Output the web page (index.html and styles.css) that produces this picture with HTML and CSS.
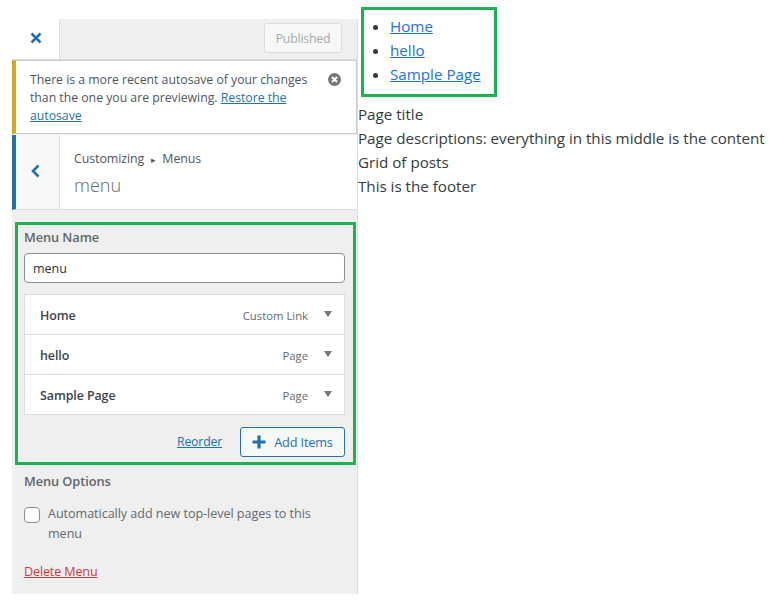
FILE: index.html
```html
<!DOCTYPE html>
<html lang="en">
<head>
<meta charset="utf-8">
<title>Customizing Menus</title>
<link rel="stylesheet" href="styles.css">
</head>
<body>
<div class="page">
  <aside class="panel">
    <header class="topbar">
      <div class="close-tab">
        <svg width="12" height="12" viewBox="0 0 12 12"><path d="M1.500 1.500 L10.500 10.500 M10.500 1.500 L1.500 10.500" class="icon-stroke"/></svg>
      </div>
      <div class="published">Published</div>
    </header>
    <div class="notice">
      <p class="notice-text">There is a more recent autosave of your changes than the one you are previewing. <a href="#" class="link">Restore the autosave</a></p>
      <svg class="notice-x" width="13" height="13" viewBox="0 0 13 13"><circle cx="6.500" cy="6.500" r="6.500" fill="#72777c"/><path d="M4 4 L9 9 M9 4 L4 9" stroke="#fff" stroke-width="2"/></svg>
    </div>
    <div class="section-head">
      <div class="back-tab">
        <svg width="9" height="14" viewBox="0 0 9 14"><path d="M7.500 1.500 L2 7 L7.500 12.500" class="icon-stroke"/></svg>
      </div>
      <div class="section-title">
        <div class="crumb">Customizing <span class="crumb-arrow">▸</span> Menus</div>
        <div class="section-name">menu</div>
      </div>
    </div>
    <div class="panel-body">
      <section class="menu-box">
        <label class="field-label">Menu Name</label>
        <div class="name-input">menu</div>
        <ul class="items">
          <li class="item"><span class="item-title">Home</span><span class="item-type">Custom Link</span><span class="caret"></span></li>
          <li class="item"><span class="item-title">hello</span><span class="item-type">Page</span><span class="caret"></span></li>
          <li class="item"><span class="item-title">Sample Page</span><span class="item-type">Page</span><span class="caret"></span></li>
        </ul>
        <div class="actions">
          <a href="#" class="link reorder">Reorder</a>
          <div class="add-btn">
            <svg width="14" height="14" viewBox="0 0 14 14"><path d="M7 0.500 V13.500 M0.500 7 H13.500" stroke="#2271b1" stroke-width="3.200" fill="none"/></svg>
            <span>Add Items</span>
          </div>
        </div>
      </section>
      <div class="options">
        <div class="field-label">Menu Options</div>
        <div class="check-row">
          <span class="checkbox"></span>
          <span class="check-text">Automatically add new top-level pages to this menu</span>
        </div>
        <a href="#" class="delete">Delete Menu</a>
      </div>
    </div>
  </aside>
  <main class="preview">
    <nav class="nav-box">
      <ul class="nav-list">
        <li><a href="#">Home</a></li>
        <li><a href="#">hello</a></li>
        <li><a href="#">Sample Page</a></li>
      </ul>
    </nav>
    <div class="copy">
      <div>Page title</div>
      <div>Page descriptions: everything in this middle is the content</div>
      <div>Grid of posts</div>
      <div>This is the footer</div>
    </div>
  </main>
</div>
</body>
</html>
```
FILE: styles.css
```css
* { box-sizing: border-box; }
html, body { margin: 0; padding: 0; background: #fff; }
body { font-family: "Open Sans", "Noto Sans", sans-serif; color: #50575e; }
.page { display: flex; align-items: flex-start; height: 600px; overflow: hidden; }
.panel { width: 346px; height: 575px; margin: 19px 0 0 12px; background: #efefef; border-right: 1px solid #ddd; flex: none; }
.topbar { height: 41px; display: flex; justify-content: space-between; align-items: flex-start; border-bottom: 1px solid #ddd; }
.close-tab { width: 48px; height: 40px; background: #fff; border-right: 1px solid #ddd; display: flex; align-items: center; justify-content: center; padding-bottom: 3px; }
.icon-stroke { fill: none; stroke: #2271b1; stroke-width: 2.600; }
.published { margin: 4px 15px 0 0; width: 78px; height: 30px; background: #f6f7f7; border: 1px solid #dcdcde; border-radius: 3px; color: #a7aaad; font-size: 12.300px; line-height: 30px; text-align: center; letter-spacing: -0.200px; }
.notice { height: 74px; margin-bottom: 1px; background: #fff; border: 1px solid #ccc; border-left: 4px solid #dba617; display: flex; padding: 10px 14px 0 14px; gap: 13px; }
.notice-text { margin: 0; width: 285px; flex: none; font-size: 12.300px; line-height: 18px; color: #50575e; letter-spacing: -0.030px; }
.notice-x { margin-top: 2px; flex: none; }
.link { color: #2271b1; text-decoration: underline; }
.section-head { height: 75px; display: flex; background: #fff; border-bottom: 1px solid #ddd; border-left: 4px solid #2271b1; }
.back-tab { width: 44px; background: #f6f7f7; border-right: 1px solid #ddd; display: flex; align-items: center; justify-content: center; padding: 0 5px 2px 0; }
.section-title { padding: 15px 0 0 14px; }
.crumb { font-size: 12.400px; line-height: 18px; color: #50575e; letter-spacing: -0.080px; }
.crumb-arrow { font-size: 9px; margin: 0 3.500px; }
.section-name { font-size: 18px; line-height: 24px; color: #646970; margin-top: 4px; font-weight: 300; }
.panel-body { padding: 12px 0 0 3px; }
.menu-box { width: 341px; height: 243px; border: 3px solid #1fb14f; padding: 0 8px 0 6px; }
.field-label { display: block; font-size: 12.800px; font-weight: 600; line-height: 18px; color: #5f656b; letter-spacing: -0.080px; }
.menu-box .field-label { margin-top: 3px; }
.name-input { margin-top: 7px; height: 30px; background: #fff; border: 1px solid #8c8f94; border-radius: 4px; font-size: 12.500px; line-height: 30px; padding-left: 8px; color: #2c3338; }
.items { list-style: none; margin: 11px 0 0; padding: 0; background: #fff; border: 1px solid #dcdcde; }
.item { height: 40px; display: flex; align-items: center; padding: 2px 12px 0 15px; border-bottom: 1px solid #dcdcde; }
.item:last-child { height: 39px; border-bottom: 0; padding-top: 1px; }
.item-title { flex: 1; font-size: 12.400px; font-weight: 600; color: #3c434a; letter-spacing: -0.060px; }
.item-type { font-size: 11.300px; color: #646970; letter-spacing: 0; }
.caret { width: 0; height: 0; margin: -3px 0 0 16px; border: 4px solid transparent; border-width: 6px 4px 0; border-top-color: #72777c; }
.actions { display: flex; justify-content: flex-end; align-items: center; gap: 18px; margin-top: 12px; }
.reorder { font-size: 12.300px; letter-spacing: -0.200px; margin-top: -2px; }
.add-btn { width: 105px; height: 30px; display: flex; align-items: center; justify-content: center; gap: 8px; background: #f6f7f7; border: 1px solid #2271b1; border-radius: 3px; color: #2271b1; font-size: 12.700px; letter-spacing: -0.150px; }
.options { padding: 7px 12px 0 9px; }
.check-row { display: flex; gap: 8px; margin-top: 14px; }
.checkbox { width: 16px; height: 16px; flex: none; margin-top: 3px; background: #fff; border: 1px solid #8c8f94; border-radius: 4px; }
.check-text { width: 285px; font-size: 12.600px; line-height: 20px; color: #646970; letter-spacing: -0.050px; }
.delete { display: inline-block; margin-top: 19px; font-size: 12.600px; color: #d63638; text-decoration: underline; letter-spacing: -0.150px; }
.preview { padding-top: 7px; flex: 1; font-size: 15.200px; line-height: 24px; color: #333b41; }
.nav-box { width: 136px; height: 90px; margin-left: 3px; border: 3px solid #1fb14f; }
.nav-list { margin: 4px 0 0; padding: 0 0 0 26px; }
.nav-list a { color: #1a73e8; }
.copy { margin-top: 5px; white-space: nowrap; letter-spacing: -0.015px; }
```
